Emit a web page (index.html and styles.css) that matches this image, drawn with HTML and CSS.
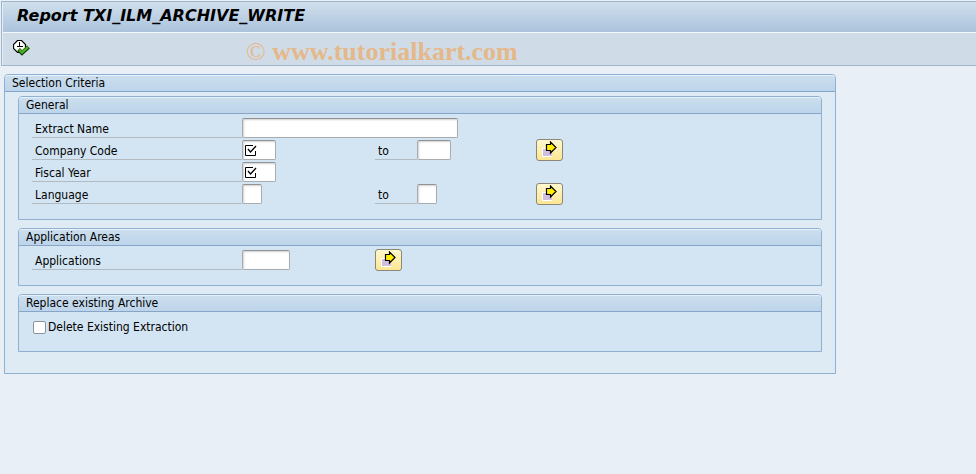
FILE: index.html
```html
<!DOCTYPE html>
<html lang="en">

<head>
  <meta name="viewport" content="width=device-width, initial-scale=1.0">
  <meta charset="utf-8">
  <title>Report TXI_ILM_ARCHIVE_WRITE</title>
  <link rel="stylesheet" href="styles.css">
</head>

<body>
  <!-- shared icons -->
  <svg class="defs" width="0" height="0" aria-hidden="true">
    <symbol id="required" viewBox="0 0 12 12">
      <path d="M8 .5H.5V10.5H10.5V6" fill="none" stroke="#000"/>
      <path d="M3 4L5.500 7L11 1" fill="none" stroke="#000" stroke-width="1.300"/>
    </symbol>
    <symbol id="multi" viewBox="0 0 15 16">
      <path d="M0 7H10V16H0z" fill="#fff"/>
      <path d="M1 8H10V15H1z" fill="#d0bfdf"/>
      <path d="M4.500 3.500H8.500V1L14 6.500L8.500 12V9.500H4.500z" fill="#ffee00" stroke="#000" stroke-width="1.200"/>
    </symbol>
  </svg>

  <header class="header">
    <h1 class="title">Report TXI_ILM_ARCHIVE_WRITE</h1>
    <div class="toolbar">
      <button class="execute" type="button" aria-label="Execute">
        <svg width="17" height="17" viewBox="0 0 17 17">
          <path d="M4.500 .5H8.500L12.500 4.500V8.500L8.500 12.500H4.500L.5 8.500V4.500z" fill="#fff" stroke="#000" stroke-width="1.200"/>
          <path d="M6.500 2V7M4 6.500H10" fill="none" stroke="#000"/>
          <path d="M5.500 9.500L9 13L15.500 7" fill="none" stroke="#0c3a08" stroke-width="4"/>
          <path d="M6 9.500L9 12.500L15 7" fill="none" stroke="#4fae22" stroke-width="2.400"/>
        </svg>
      </button>
      <span class="watermark"><span class="copy">©</span> www.tutorialkart.com</span>
    </div>
  </header>

  <main class="main">
    <form class="group outer">
      <h2 class="group-title">Selection Criteria</h2>
      <div class="group-list">

        <section class="group">
          <h3 class="group-title">General</h3>
          <div class="rows">
            <div class="row">
              <label class="label" for="extract">Extract Name</label>
              <span class="field wide"><input class="input size-30" id="extract" type="text"></span>
            </div>
            <div class="row">
              <label class="label" for="company">Company Code</label>
              <span class="field">
                <input class="input size-4" id="company" type="text" required>
                <svg class="mark" width="12" height="12"><use href="#required"/></svg>
              </span>
              <label class="label" for="company-to">to</label>
              <span class="field"><input class="input size-4" id="company-to" type="text"></span>
              <button class="multi" type="button" aria-label="Multiple selection"><svg width="15" height="16"><use href="#multi"/></svg></button>
            </div>
            <div class="row">
              <label class="label" for="year">Fiscal Year</label>
              <span class="field">
                <input class="input size-4" id="year" type="text" required>
                <svg class="mark" width="12" height="12"><use href="#required"/></svg>
              </span>
            </div>
            <div class="row">
              <label class="label" for="language">Language</label>
              <span class="field"><input class="input size-2" id="language" type="text"></span>
              <label class="label" for="language-to">to</label>
              <span class="field"><input class="input size-2" id="language-to" type="text"></span>
              <button class="multi" type="button" aria-label="Multiple selection"><svg width="15" height="16"><use href="#multi"/></svg></button>
            </div>
          </div>
        </section>

        <section class="group">
          <h3 class="group-title">Application Areas</h3>
          <div class="rows">
            <div class="row">
              <label class="label" for="applications">Applications</label>
              <span class="field"><input class="input size-6" id="applications" type="text"></span>
              <button class="multi" type="button" aria-label="Multiple selection"><svg width="15" height="16"><use href="#multi"/></svg></button>
            </div>
          </div>
        </section>

        <section class="group">
          <h3 class="group-title">Replace existing Archive</h3>
          <div class="rows">
            <div class="check-row">
              <input class="checkbox" id="delete" type="checkbox">
              <label for="delete">Delete Existing Extraction</label>
            </div>
          </div>
        </section>

      </div>
    </form>
  </main>
</body>

</html>
```
FILE: styles.css
```css
* {
  box-sizing: border-box;
}

body, h1, h2, h3 {
  margin: 0;
}

body {
  background: #e8eff6;
  color: #000;
  font: 12px/16px "DejaVu Sans Condensed", "DejaVu Sans", sans-serif;
}

.defs {
  position: absolute;
}

/* header */
.header {
  margin: 1px 0 0 1px;
  border: 1px solid #a0b6c8;
  border-right: 0;
}

.title {
  height: 31px;
  padding: 0 14px;
  border-bottom: 1px solid #f2f7fb;
  border-left: 1px solid #e4edf5;
  background: linear-gradient(#d0dfec, #abc3dc);
  font: italic bold 16px/27px "DejaVu Sans", sans-serif;
}

.toolbar {
  display: flex;
  align-items: center;
  height: 32px;
  padding-left: 10px;
  border-left: 1px solid #e4edf5;
  background: #cfdce7;
}

.execute {
  display: flex;
  width: 20px;
  padding: 0 0 2px;
  border: 0;
  background: none;
}

.watermark {
  margin-left: 213px;
  padding-top: 5px;
  color: #e5b88a;
  font: bold 26px/28px "Liberation Serif", serif;
}

.copy {
  font-weight: normal;
}

/* groups */
.main {
  padding: 8px 4px;
}

.group {
  border: 1px solid #8fb0d1;
  border-radius: 4px 4px 0 0;
  background: #d3e5f2;
}

.outer {
  max-width: 832px;
  background: #deebf4;
}

.group-title {
  height: 17px;
  padding: 0 7px;
  border-top: 1px solid #e6f1fa;
  border-bottom: 1px solid #87a5c9;
  border-radius: 3px 3px 0 0;
  background: linear-gradient(#cbdeee, #bdd4ea);
  font-size: 12px;
  font-weight: normal;
  line-height: 15px;
}

.group-list {
  display: flex;
  flex-direction: column;
  gap: 8px;
  padding: 4px 13px 21px;
}

/* rows */
.rows {
  padding: 3px 13px 14px;
}

.row {
  display: grid;
  grid-template-columns: 210px 133px 42px 119px 27px;
  height: 22px;
}

.label {
  height: 21px;
  padding-left: 3px;
  border-bottom: 1px solid #b2bac1;
  line-height: 24px;
}

.field {
  position: relative;
}

.wide {
  grid-column: 2 / -1;
}

.input {
  display: block;
  height: 20px;
  margin-top: 1px;
  padding: 0 3px;
  border: 1px solid #a9acaf;
  border-top-color: #929292;
  border-radius: 2px;
  background: #fff;
  box-shadow: inset 1px 1px 2px #d0d0d0;
  font: inherit;
}

.size-2 {
  width: 20px;
}

.size-4 {
  width: 34px;
}

.size-6 {
  width: 48px;
}

.size-30 {
  width: 216px;
}

.mark {
  position: absolute;
  top: 6px;
  left: 3px;
  pointer-events: none;
}

.multi {
  display: flex;
  align-items: center;
  justify-content: center;
  width: 27px;
  height: 22px;
  padding: 0 0 2px;
  border: 1px solid #8b8778;
  border-radius: 3px;
  background: linear-gradient(#fff8cf, #fbe691);
}

.check-row {
  display: flex;
  align-items: center;
  gap: 2px;
  height: 22px;
  padding: 2px 0 0 1px;
}

.checkbox {
  appearance: none;
  width: 13px;
  height: 13px;
  margin: 0;
  border: 1px solid #8f9499;
  border-radius: 2px;
  background: #fff;
}

.checkbox:checked {
  background: #4fae22;
}
```
